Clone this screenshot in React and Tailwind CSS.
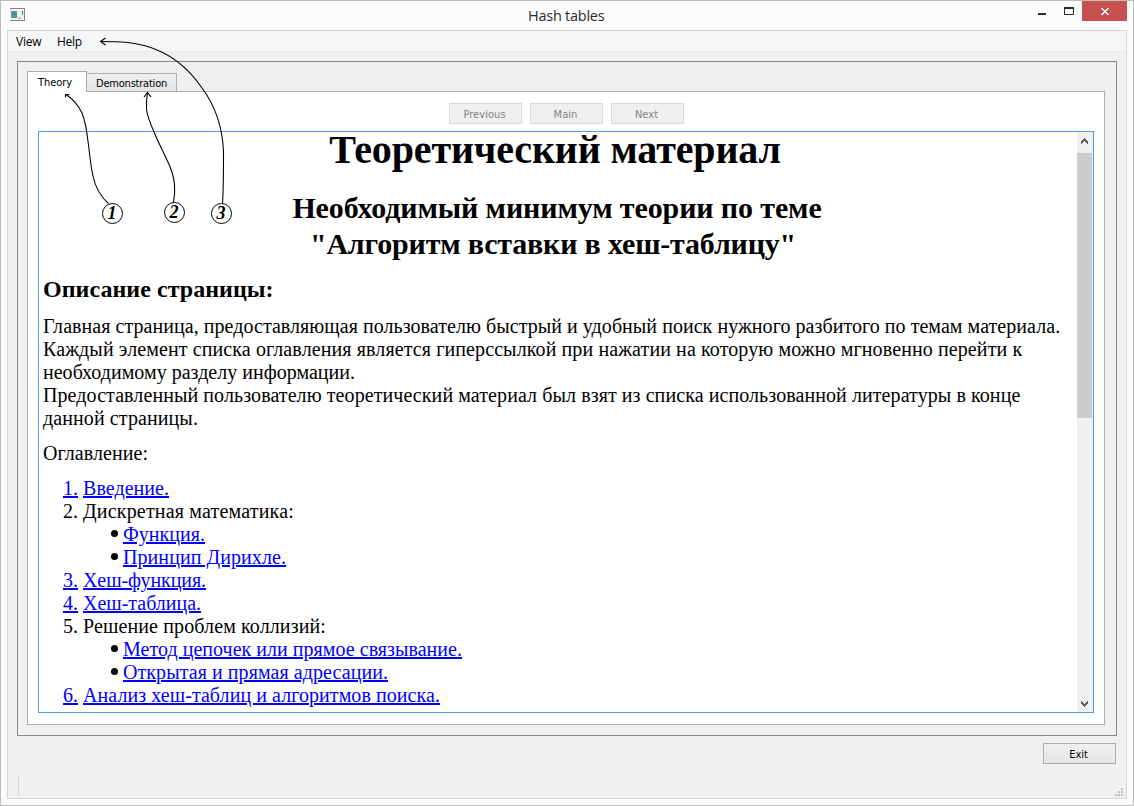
function TitleBar() {
  return (
    <div className="relative flex h-[29px] shrink-0 items-start justify-between">
      <svg className="ml-[9px] mt-[7px]" width="15" height="13" shapeRendering="crispEdges">
        <rect width="15" height="13" fill="#858585" />
        <rect x="0" y="1" width="14" height="11" fill="#f0f0f0" />
        <rect x="1" y="3" width="6" height="7" fill="#7d97b4" />
        <rect x="2" y="4" width="5" height="6" fill="#4b9a86" />
        <rect x="2" y="4" width="3" height="3" fill="#4f83a4" />
        <rect x="8" y="9" width="3" height="2" fill="#c9c9c9" />
        <rect x="12" y="3" width="1" height="2" fill="#2f5fa8" />
        <rect x="12" y="5" width="1" height="2" fill="#4aa04a" />
      </svg>
      <div className="absolute left-[527px] top-[4px] whitespace-nowrap font-['Open_Sans',sans-serif] text-[14.5px] leading-[22px] tracking-[-0.25px] text-[#2b2b2b] [font-stretch:normal]">
        Hash tables
      </div>
      <div className="flex pr-[6px]">
        <svg width="45" height="20" shapeRendering="crispEdges">
          <rect x="1" y="12" width="8" height="2" fill="#2a2a2a" />
          <path d="M27 6h10v8h-10zM28 8v5h8v-5z" fillRule="evenodd" fill="#2a2a2a" />
        </svg>
        <div className="flex h-5 w-[45px] items-center justify-center bg-[#c75050]">
          <svg className="ml-px" width="8" height="7" shapeRendering="crispEdges">
            <path
              d="M0 0h2v1h1v1h2v-1h1v-1h2v1h-1v1h-1v1h-1v1h1v1h1v1h1v1h-2v-1h-1v-1h-2v1h-1v1h-2v-1h1v-1h1v-1h1v-1h-1v-1h-1v-1h-1z"
              fill="#fff"
            />
          </svg>
        </div>
      </div>
    </div>
  );
}

function MenuBar() {
  return (
    <div className="flex h-[21px] shrink-0 gap-4 border-b border-[#e7e8e9] bg-[#f5f6f7] pl-2 font-['Open_Sans',sans-serif] text-[12px] leading-[21px] tracking-[-0.25px] text-black [font-stretch:normal]">
      <span className="w-[25px]">View</span>
      <span>Help</span>
    </div>
  );
}

function NavButton({ children }) {
  return (
    <button
      disabled
      className="h-[21px] w-[73px] border border-[#d9d9d9] bg-[#efefef] pr-[2px] pt-[2px] text-center leading-[17px] tracking-[0.05px] text-[#838383]"
    >
      {children}
    </button>
  );
}

function Line({ className = '', children }) {
  return <div className={`whitespace-nowrap ${className}`}>{children}</div>;
}

function Item({ n, link, className, children }) {
  const style = link ? 'text-[#0000ff] underline' : '';
  return (
    <li className="flex pl-6">
      <span className="w-5 shrink-0">
        <span className={style}>{n}.</span>
      </span>
      <span className={`whitespace-nowrap ${style} ${className}`}>{children}</span>
    </li>
  );
}

function SubItem({ className, children }) {
  return (
    <li className="flex items-center pl-[72px]">
      <span className="mb-[2px] mr-[5px] size-[7px] shrink-0 rounded-full bg-black" />
      <span className={`whitespace-nowrap text-[#0000ff] underline ${className}`}>{children}</span>
    </li>
  );
}

function Document() {
  return (
    <div className="min-w-0 flex-1 font-['Liberation_Serif',serif] text-[20px] leading-[23px] tracking-normal text-black decoration-1">
      <h1 className="pr-[6px] text-center text-[40px] font-bold leading-[36px] tracking-[-0.14px]">
        Теоретический материал
      </h1>
      <h2 className="mt-[22px] text-center text-[30px] font-bold leading-9">
        <Line className="pr-[2px] tracking-[-0.12px]">Необходимый минимум теории по теме</Line>
        <Line className="pr-[10px] tracking-[-0.18px]">"Алгоритм вставки в хеш-таблицу"</Line>
      </h2>
      <h3 className="mt-[13px] pl-1 text-[24px] font-bold leading-7 tracking-[0.04px]">Описание страницы:</h3>
      <div className="mt-3 pl-1">
        <Line className="tracking-[0.048px]">
          Главная страница, предоставляющая пользователю быстрый и удобный поиск нужного разбитого по темам материала.
        </Line>
        <Line className="tracking-[0.104px]">
          Каждый элемент списка оглавления является гиперссылкой при нажатии на которую можно мгновенно перейти к
        </Line>
        <Line className="tracking-[0.016px]">необходимому разделу информации.</Line>
        <Line className="tracking-[0.08px]">
          Предоставленный пользователю теоретический материал был взят из списка использованной литературы в конце
        </Line>
        <Line className="tracking-[0.097px]">данной страницы.</Line>
      </div>
      <p className="mt-3 pl-1 tracking-[0.058px]">Оглавление:</p>
      <ol className="mt-3">
        <Item n={1} link className="tracking-[0.043px]">Введение.</Item>
        <Item n={2} className="tracking-[0.182px]">Дискретная математика:</Item>
        <SubItem className="tracking-[0.022px]">Функция.</SubItem>
        <SubItem className="tracking-[0.071px]">Принцип Дирихле.</SubItem>
        <Item n={3} link className="tracking-[-0.07px]">Хеш-функция.</Item>
        <Item n={4} link className="tracking-[-0.015px]">Хеш-таблица.</Item>
        <Item n={5} className="tracking-[0.114px]">Решение проблем коллизий:</Item>
        <SubItem className="tracking-[0.031px]">Метод цепочек или прямое связывание.</SubItem>
        <SubItem className="tracking-[0.067px]">Открытая и прямая адресации.</SubItem>
        <Item n={6} link className="tracking-[0.06px]">Анализ хеш-таблиц и алгоритмов поиска.</Item>
      </ol>
    </div>
  );
}

function ScrollBar() {
  return (
    <div className="flex w-4 shrink-0 flex-col justify-between bg-[#f0f0f0] pr-px">
      <div>
        <div className="flex h-[21px] justify-center">
          <svg className="mt-[6px]" width="7" height="6" shapeRendering="crispEdges">
            <path d="M3 0h1v1h1v1h1v1h1v3h-1v-1h-1v-1h-1v-1h-1v1h-1v1h-1v1h-1v-3h1v-1h1v-1h1z" fill="#606060" />
          </svg>
        </div>
        <div className="h-[265px] bg-[#cdcdcd]" />
      </div>
      <div className="flex justify-center pb-[5px]">
        <svg width="7" height="6" shapeRendering="crispEdges">
          <path d="M3 6h1v-1h1v-1h1v-1h1v-3h-1v1h-1v1h-1v1h-1v-1h-1v-1h-1v-1h-1v3h1v1h1v1h1z" fill="#606060" />
        </svg>
      </div>
    </div>
  );
}

function Tabs() {
  return (
    <div className="relative z-10 -mb-px flex items-end text-black">
      <div className="h-[21px] w-[60px] border border-b-0 border-[#acacac] bg-white pl-[10px] pt-px leading-5 tracking-[-0.05px]">
        Theory
      </div>
      <div className="-ml-px h-[19px] w-[91px] border border-[#acacac] bg-gradient-to-b from-[#f0f0f0] to-[#e5e5e5] pl-[9px] pt-px leading-[18px]">
        Demonstration
      </div>
    </div>
  );
}

function Callouts() {
  return (
    <svg
      className="pointer-events-none absolute -left-px -top-px z-20"
      width="1134"
      height="806"
      fill="none"
      stroke="#000"
      strokeWidth="1.1"
    >
      <path d="M108.500 203.500C100 196 95 186 93 176C90 163 89.500 150 87.500 138C86.500 128 85 121 82 113C78 105 73 99 66 94.500" />
      <path d="M65.500 97.500V94.500H69.500" />
      <path d="M173.500 202.500C175 195 175 190 174.500 184C173.500 175 171 168 167 160C163 151 158 142 154.500 133C150 123 147 116 146.500 109C146.300 103 146.500 98 147.500 93" />
      <path d="M144 97L147.500 92.500L151 97" />
      <path d="M222.500 203.500C223.500 190 223.500 175 223.500 152C222.500 126 214 104 202 88C187 66 167 52 146 46C132 42 122 41.500 100 41.500" />
      <path d="M105.500 38L100.500 41.500L105.500 45" />
      <g fill="#fff" strokeWidth="1">
        <circle cx="112.500" cy="213.500" r="10" />
        <circle cx="174.500" cy="212.500" r="10" />
        <circle cx="221.500" cy="213.500" r="10" />
      </g>
      <g
        className="font-['Liberation_Serif',serif] text-[18px] font-bold italic"
        fill="#000"
        stroke="none"
        textAnchor="middle"
      >
        <text x="112" y="219">1</text>
        <text x="174" y="218">2</text>
        <text x="221" y="219">3</text>
      </g>
    </svg>
  );
}

const GRIP = [[6, 0], [3, 3], [6, 3], [0, 6], [3, 6], [6, 6]];

export default function App() {
  return (
    <div className="relative flex h-[806px] w-[1134px] flex-col overflow-hidden border border-[#bcbcbc] bg-[#fcfcfc] font-['DejaVu_Sans_Condensed','DejaVu_Sans',sans-serif] text-[11px] tracking-[-0.21px] [font-stretch:condensed]">
      <TitleBar />
      <div className="mx-[6px] flex h-[769px] flex-col border border-[#d6d6d6] bg-[#f0f0f0]">
        <MenuBar />
        <div className="mx-[9px] mt-[9px] flex h-[675px] shrink-0 flex-col border border-[#828790] px-[9px] pt-[9px]">
          <Tabs />
          <div className="flex h-[634px] w-[1078px] shrink-0 flex-col border border-[#acacac] bg-white px-[10px] pt-[11px]">
            <div className="flex justify-center gap-2 pl-[1px]">
              <NavButton>Previous</NavButton>
              <NavButton>Main</NavButton>
              <NavButton>Next</NavButton>
            </div>
            <div className="mt-[7px] flex h-[582px] w-[1056px] border border-[#569de5] bg-white">
              <Document />
              <ScrollBar />
            </div>
          </div>
        </div>
        <div className="mt-[7px] flex justify-end pr-[10px]">
          <button className="h-[21px] w-[73px] border border-[#acacac] bg-gradient-to-b from-[#f0f0f0] to-[#e5e5e5] pr-[2px] pt-[2px] text-center leading-[17px] tracking-normal text-black">
            Exit
          </button>
        </div>
        <div className="mt-3 flex items-start justify-between pl-[10px] pr-[3px]">
          <div className="h-5 w-px bg-[#d7d7d7]" />
          <svg className="mt-3" width="8" height="8" shapeRendering="crispEdges" fill="#bfbfbf">
            {GRIP.map(([x, y]) => (
              <rect key={`${x}-${y}`} x={x} y={y} width="2" height="2" />
            ))}
          </svg>
        </div>
      </div>
      <Callouts />
    </div>
  );
}
